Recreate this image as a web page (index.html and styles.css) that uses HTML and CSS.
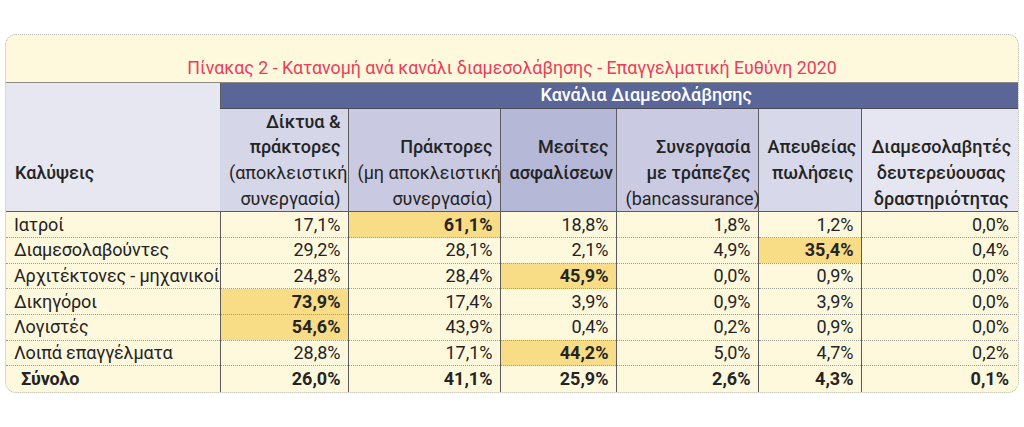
FILE: index.html
```html
<!DOCTYPE html>
<html lang="el">
<head>
<meta charset="utf-8">
<title>Πίνακας 2</title>
<link rel="stylesheet" href="styles.css">
</head>
<body>
<div class="card">
  <div class="title">Πίνακας 2 - Κατανομή ανά κανάλι διαμεσολάβησης - Επαγγελματική Ευθύνη 2020</div>
  <table class="grid">
    <colgroup>
      <col class="c0"><col class="c1"><col class="c2"><col class="c3"><col class="c4"><col class="c5"><col class="c6">
    </colgroup>
    <thead>
      <tr class="band-row">
        <th rowspan="2" class="cov">Καλύψεις</th>
        <th colspan="6" class="band">Κανάλια Διαμεσολάβησης</th>
      </tr>
      <tr class="sub">
        <th class="h1">Δίκτυα &amp;<br>πράκτορες<br><span class="reg">(αποκλειστική<br>συνεργασία)</span></th>
        <th class="h2">Πράκτορες<br><span class="reg">(μη αποκλειστική<br>συνεργασία)</span></th>
        <th class="h3 mid">Μεσίτες<br>ασφαλίσεων</th>
        <th class="h4">Συνεργασία<br>με τράπεζες<br><span class="reg">(bancassurance)</span></th>
        <th class="h5 mid">Απευθείας<br>πωλήσεις</th>
        <th class="h6">Διαμεσολαβητές<br>δευτερεύουσας<br>δραστηριότητας</th>
      </tr>
    </thead>
    <tbody>
      <tr><td class="name">Ιατροί</td><td>17,1%</td><td class="hi">61,1%</td><td>18,8%</td><td>1,8%</td><td>1,2%</td><td class="last">0,0%</td></tr>
      <tr><td class="name">Διαμεσολαβούντες</td><td>29,2%</td><td>28,1%</td><td>2,1%</td><td>4,9%</td><td class="hi">35,4%</td><td class="last">0,4%</td></tr>
      <tr><td class="name">Αρχιτέκτονες - μηχανικοί</td><td>24,8%</td><td>28,4%</td><td class="hi">45,9%</td><td>0,0%</td><td>0,9%</td><td class="last">0,0%</td></tr>
      <tr><td class="name">Δικηγόροι</td><td class="hi">73,9%</td><td>17,4%</td><td>3,9%</td><td>0,9%</td><td>3,9%</td><td class="last">0,0%</td></tr>
      <tr><td class="name">Λογιστές</td><td class="hi">54,6%</td><td>43,9%</td><td>0,4%</td><td>0,2%</td><td>0,9%</td><td class="last">0,0%</td></tr>
      <tr><td class="name">Λοιπά επαγγέλματα</td><td>28,8%</td><td>17,1%</td><td class="hi">44,2%</td><td>5,0%</td><td>4,7%</td><td class="last">0,2%</td></tr>
      <tr class="total"><td class="name">Σύνολο</td><td>26,0%</td><td>41,1%</td><td>25,9%</td><td>2,6%</td><td>4,3%</td><td class="last">0,1%</td></tr>
    </tbody>
  </table>
</div>
</body>
</html>
```

FILE: styles.css
```css
html, body {
  margin: 0;
  padding: 0;
  background: #ffffff;
}
body {
  padding: 34px 5px 0 5px;
  font-family: Roboto, "Noto Sans", "DejaVu Sans", sans-serif;
  color: #242424;
}
.card {
  width: 1014px;
  box-sizing: border-box;
  border: 1px dotted #b8b8b0;
  border-radius: 11px;
  background: #fef8dd;
  overflow: hidden;
}
.title {
  height: 48px;
  box-sizing: border-box;
  padding-top: 22px;
  text-align: center;
  font-size: 17.8px;
  line-height: 22px;
  color: #e8405b;
  border-bottom: 1px solid #8c8c84;
}
.grid {
  width: 1013px;
  border-collapse: collapse;
  table-layout: fixed;
  font-size: 18px;
}
.c0 { width: 214px; }
.c1 { width: 128px; }
.c2 { width: 152px; }
.c3 { width: 116px; }
.c4 { width: 142px; }
.c5 { width: 103px; }
.c6 { width: 158px; }

.grid th, .grid td {
  padding: 0 7px 0 9px;
  border-left: 1px solid #5c5c5c;
  white-space: nowrap;
}
.grid th:first-child, .grid td:first-child { border-left: none; }

.band-row { height: 25px; }
.grid .band {
  background: #5a6698;
  color: #ffffff;
  font-weight: 500;
  text-align: center;
  padding-left: 60px;
  line-height: 24px;
  border-bottom: 1px solid #4a4a55;
}
.grid .cov {
  background: #e6e7f1;
  text-align: left;
  font-weight: 500;
  vertical-align: middle;
  padding: 50px 0 0 9px;
  border-bottom: 1px solid #5c5c5c;
}
.sub { height: 103px; }
.grid .sub th {
  text-align: right;
  font-weight: 500;
  vertical-align: bottom;
  line-height: 25.7px;
  border-bottom: 1px solid #5c5c5c;
}
.grid .sub th.mid { vertical-align: middle; }
.sub .reg { font-weight: 400; }
.h1 { background: #d5d6e7; }
.h2 { background: #c9cae1; }
.h3 { background: #b6b8d7; }
.h4 { background: #cacbe2; }
.h5 { background: #d7d8e9; }
.grid .sub .h6 { background: #e5e6f1; text-align: center; padding: 0 0 0 2px; }

.grid tbody tr { height: 25.7px; }
.grid tbody td {
  text-align: right;
  line-height: 24px;
  border-bottom: 1px dotted #9a9a92;
}
.grid tbody tr:last-child td { border-bottom: none; }
.grid td.name {
  text-align: left;
  padding-left: 8px;
  padding-right: 0;
  letter-spacing: -0.15px;
}
.grid td.last { padding-right: 10px; }
.grid td.hi {
  background: #f8dc86;
  font-weight: 700;
}
.total td { font-weight: 700; }
.grid .total td.name { padding-left: 15px; }
```
